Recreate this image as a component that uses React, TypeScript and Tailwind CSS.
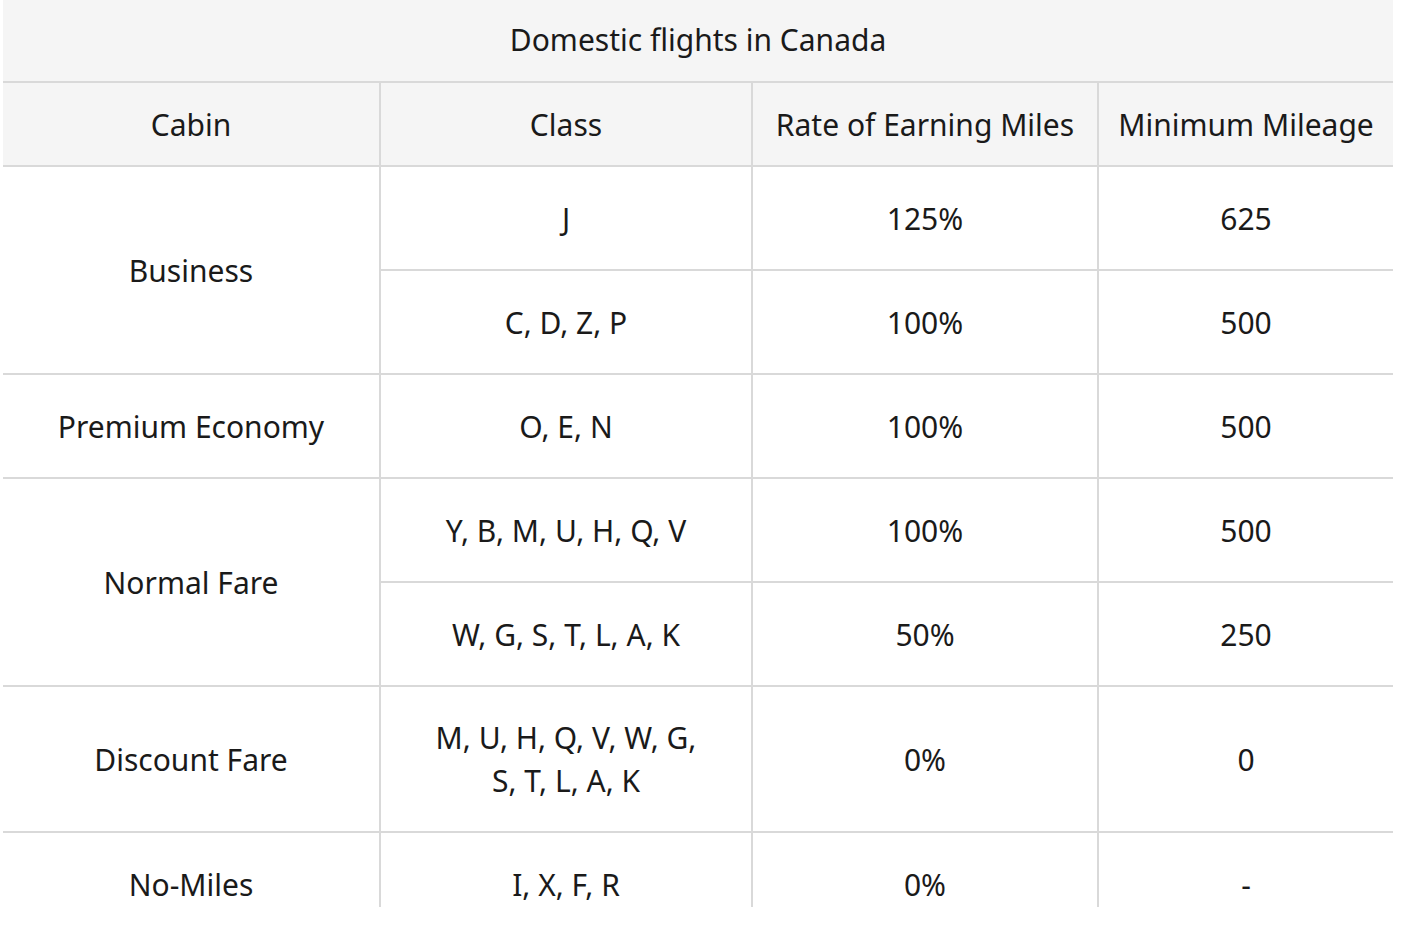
const rows: { cabin: string; span: number; cls: React.ReactNode; rate: string; min: string; h: string }[] = [
  { cabin: "Business", span: 2, cls: "J", rate: "125%", min: "625", h: "h-[104px]" },
  { cabin: "", span: 0, cls: "C, D, Z, P", rate: "100%", min: "500", h: "h-[104px]" },
  { cabin: "Premium Economy", span: 1, cls: "O, E, N", rate: "100%", min: "500", h: "h-[104px]" },
  { cabin: "Normal Fare", span: 2, cls: "Y, B, M, U, H, Q, V", rate: "100%", min: "500", h: "h-[104px]" },
  { cabin: "", span: 0, cls: "W, G, S, T, L, A, K", rate: "50%", min: "250", h: "h-[104px]" },
  {
    cabin: "Discount Fare",
    span: 1,
    cls: (
      <>
        M, U, H, Q, V, W, G,
        <br />
        S, T, L, A, K
      </>
    ),
    rate: "0%",
    min: "0",
    h: "h-[146px]",
  },
  { cabin: "No-Miles", span: 1, cls: "I, X, F, R", rate: "0%", min: "-", h: "h-[104px]" },
];

const cell = "border-2 border-[#d9d9d9] text-center align-middle px-2";

export default function App() {
  return (
    <div
      className="bg-white h-[926px] text-[#1a1a1a]"
      style={{ fontFamily: '"Noto Sans", "Open Sans", sans-serif' }}
    >
      <div className="h-[907px] w-[1393px] overflow-hidden pl-[3px]">
        <table className="w-[1390px] table-fixed border-collapse border-hidden text-[30px] leading-[43px]">
          <colgroup>
            <col className="w-[377px]" />
            <col className="w-[372px]" />
            <col className="w-[346px]" />
            <col className="w-[295px]" />
          </colgroup>
          <thead className="bg-[#f5f5f5]">
            <tr className="h-[82px]">
              <th colSpan={4} className={`${cell} font-normal pb-[2px]`}>
                Domestic flights in Canada
              </th>
            </tr>
            <tr className="h-[84px]">
              <th className={`${cell} font-normal`}>Cabin</th>
              <th className={`${cell} font-normal`}>Class</th>
              <th className={`${cell} font-normal`}>Rate of Earning Miles</th>
              <th className={`${cell} font-normal`}>Minimum Mileage</th>
            </tr>
          </thead>
          <tbody>
            {rows.map((r, i) => (
              <tr key={i} className={r.h}>
                {r.span > 0 && (
                  <td rowSpan={r.span} className={cell}>
                    {r.cabin}
                  </td>
                )}
                <td className={cell}>{r.cls}</td>
                <td className={cell}>{r.rate}</td>
                <td className={cell}>{r.min}</td>
              </tr>
            ))}
          </tbody>
        </table>
      </div>
    </div>
  );
}
